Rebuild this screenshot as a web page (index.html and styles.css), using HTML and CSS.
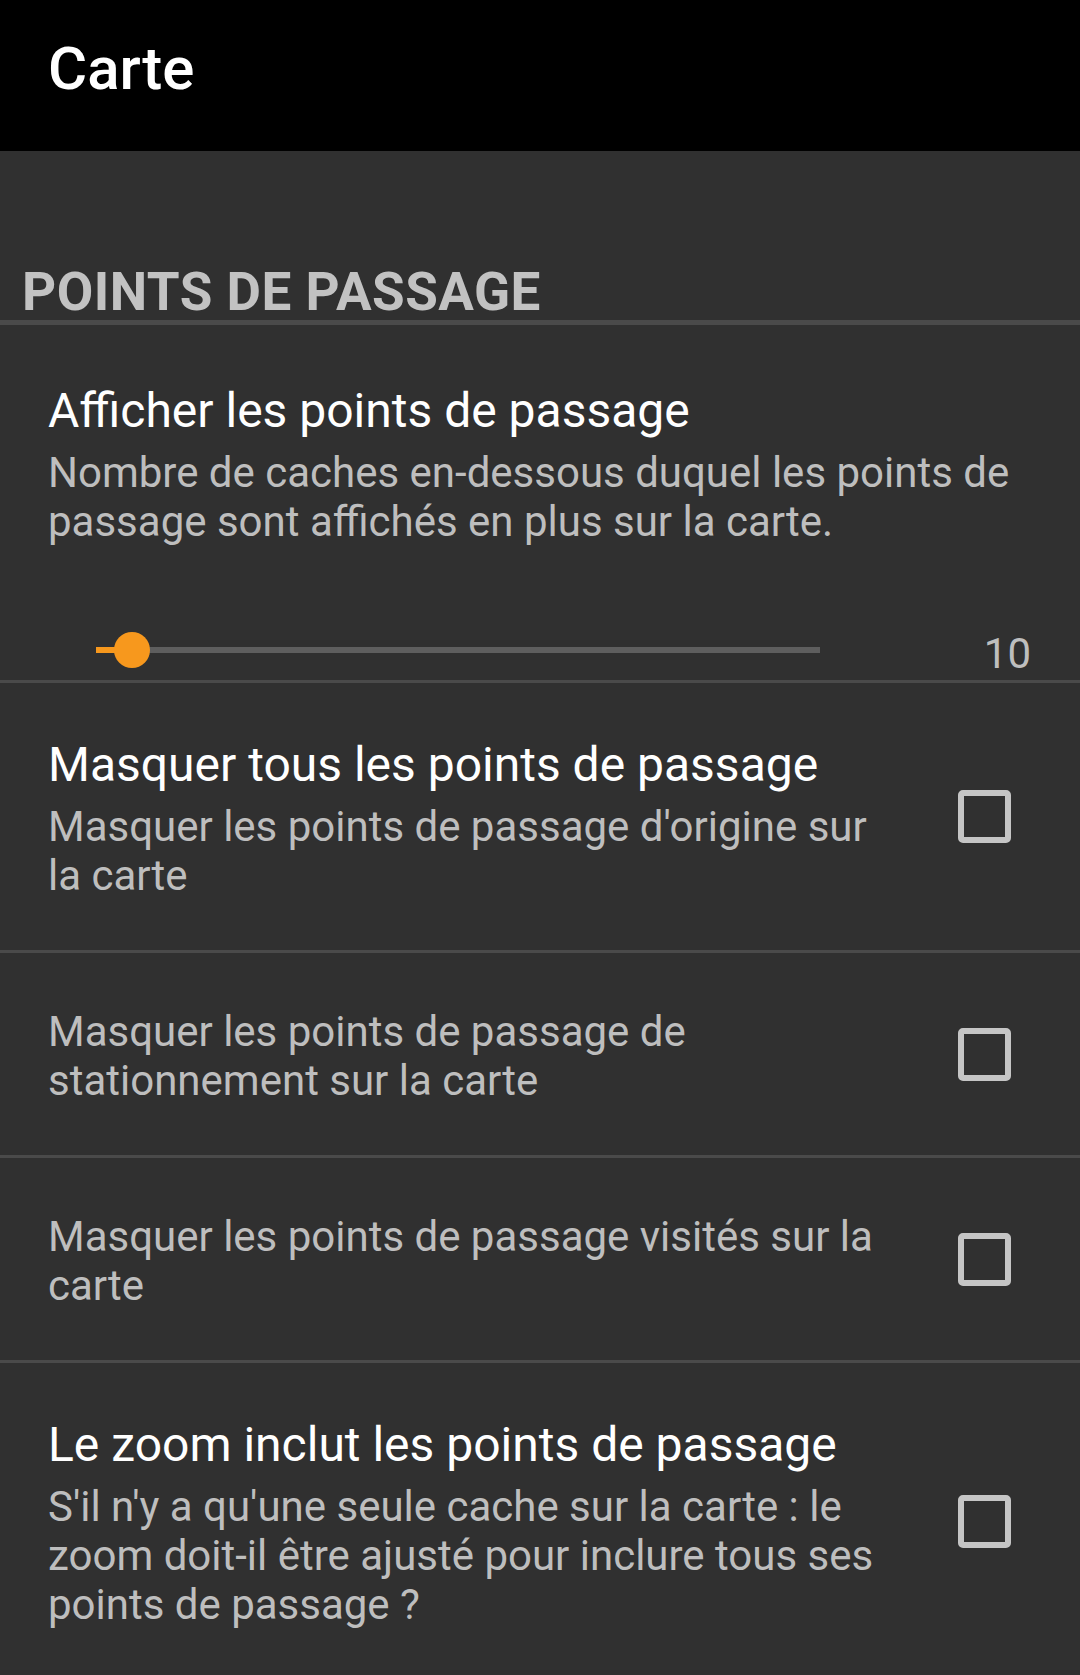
FILE: index.html
```html
<!DOCTYPE html>
<html lang="fr">
<head>
<meta charset="utf-8">
<title>Carte</title>
<link rel="stylesheet" href="styles.css">
</head>
<body>
<header class="appbar">
  <h1 class="appbar-title">Carte</h1>
</header>
<main class="prefs">
  <h2 class="category">POINTS DE PASSAGE</h2>

  <section class="pref pref-first">
    <div class="pref-text pref-text-full">
      <div class="pref-title">Afficher les points de passage</div>
      <div class="pref-summary">Nombre de caches en-dessous duquel les points de passage sont affichés en plus sur la carte.</div>
      <div class="slider-row">
        <div class="slider">
          <div class="track"></div>
          <div class="track-active" style="width:36px"></div>
          <div class="thumb" style="left:36px"></div>
        </div>
        <span class="slider-value">10</span>
      </div>
    </div>
  </section>

  <section class="pref pref-check">
    <div class="pref-text">
      <div class="pref-title">Masquer tous les points de passage</div>
      <div class="pref-summary">Masquer les points de passage d'origine sur la carte</div>
    </div>
    <span class="checkbox"></span>
  </section>

  <section class="pref pref-check">
    <div class="pref-text">
      <div class="pref-summary pref-summary-only">Masquer les points de passage de stationnement sur la carte</div>
    </div>
    <span class="checkbox"></span>
  </section>

  <section class="pref pref-check">
    <div class="pref-text">
      <div class="pref-summary pref-summary-only">Masquer les points de passage visités sur la carte</div>
    </div>
    <span class="checkbox"></span>
  </section>

  <section class="pref pref-check">
    <div class="pref-text">
      <div class="pref-title">Le zoom inclut les points de passage</div>
      <div class="pref-summary">S'il n'y a qu'une seule cache sur la carte : le zoom doit-il être ajusté pour inclure tous ses points de passage ?</div>
    </div>
    <span class="checkbox"></span>
  </section>
</main>
</body>
</html>
```

FILE: styles.css
```css
* {
  box-sizing: border-box;
}

html, body {
  margin: 0;
  padding: 0;
  background: #303030;
  font-family: Roboto, "Liberation Sans", sans-serif;
}

.appbar {
  height: 151px;
  background: #000000;
  padding: 39px 0 0 48px;
}

.appbar-title {
  margin: 0;
  font-size: 60px;
  line-height: 60px;
  font-weight: 500;
  color: #ffffff;
}

.prefs {
  display: flex;
  flex-direction: column;
}

.category {
  margin: 0;
  padding: 115px 0 2px 22px;
  font-size: 53px;
  line-height: 52px;
  font-weight: 700;
  letter-spacing: 0.5px;
  color: #c2c2c2;
  border-bottom: 5px solid #4a4a4a;
}

.pref {
  display: flex;
  align-items: center;
  padding: 54px 0 50px 48px;
  border-bottom: 3px solid #4a4a4a;
}

.pref-first {
  padding: 58px 0 6px 48px;
}

.pref-text {
  flex: 1;
  min-width: 0;
  margin-right: 68px;
}

.pref-text-full {
  margin-right: 49px;
}

.pref-title {
  font-size: 48px;
  line-height: 56px;
  color: #ffffff;
}

.pref-summary {
  margin-top: 9px;
  font-size: 42px;
  line-height: 49px;
  color: #bebebe;
}

.pref-summary-only {
  margin-top: 0;
}

.checkbox {
  flex: none;
  width: 53px;
  height: 53px;
  margin-right: 69px;
  margin-bottom: 4px;
  border: 6px solid #c5c5c5;
  border-radius: 5px;
}

.slider-row {
  display: flex;
  align-items: flex-start;
  margin-top: 80px;
  height: 48px;
}

.slider {
  position: relative;
  flex: none;
  width: 724px;
  height: 48px;
  margin-left: 48px;
}

.track {
  position: absolute;
  left: 0;
  right: 0;
  top: 21px;
  height: 6px;
  background: #5e5e5e;
}

.track-active {
  position: absolute;
  left: 0;
  top: 21px;
  height: 6px;
  background: #f7981d;
}

.thumb {
  position: absolute;
  top: 6px;
  width: 36px;
  height: 36px;
  margin-left: -18px;
  border-radius: 50%;
  background: #f7981d;
}

.slider-value {
  flex: 1;
  text-align: right;
  margin-top: 4px;
  font-size: 42px;
  line-height: 48px;
  color: #bebebe;
}
```
